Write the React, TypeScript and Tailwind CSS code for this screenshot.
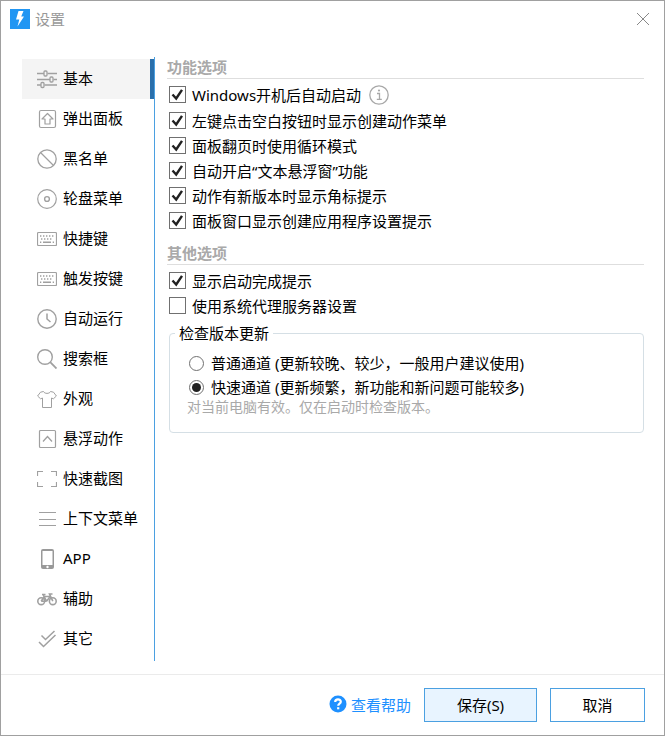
import React from "react";

type MenuItem = { label: string; icon: React.ReactNode };

const Icon = ({ children }: { children: React.ReactNode }) => (
  <svg viewBox="0 0 20 20" className="size-5 shrink-0" fill="none" stroke="#a0a0a0" aria-hidden="true">
    {children}
  </svg>
);

const KeyboardIcon = () => (
  <Icon>
    <rect x="0.5" y="3.5" width="19" height="13" rx="1" strokeWidth="1.2" />
    <path d="M3 7H17.5M4 10H16" strokeWidth="1.4" strokeDasharray="1.4 1.6" />
    <path d="M3 13.3h1.3M6 13.3h8M15.7 13.3h1.3" strokeWidth="1.4" />
  </Icon>
);

const menu: MenuItem[] = [
  {
    label: "基本",
    icon: (
      <Icon>
        <path d="M0 4.5h7M10.5 4.5H20M0 10.5h13M16.5 10.5H20M0 16h4M7.5 16H20" strokeWidth="1.3" />
        <rect x="7" y="2" width="3" height="5" rx="1" strokeWidth="1.3" />
        <rect x="13" y="8" width="3" height="5" rx="1" strokeWidth="1.3" />
        <rect x="4" y="13.5" width="3" height="5" rx="1" strokeWidth="1.3" />
      </Icon>
    ),
  },
  {
    label: "弹出面板",
    icon: (
      <Icon>
        <rect x="2.5" y="1.5" width="16" height="17" rx="1.5" strokeWidth="1.2" />
        <path d="M10.5 4.5L16 10h-3v5H8v-5H5z" strokeLinejoin="round" strokeWidth="1.2" />
      </Icon>
    ),
  },
  {
    label: "黑名单",
    icon: (
      <Icon>
        <circle cx="10" cy="10" r="9.2" strokeWidth="1.3" />
        <path d="M3.5 3.5l13 13" strokeWidth="1.3" />
      </Icon>
    ),
  },
  {
    label: "轮盘菜单",
    icon: (
      <Icon>
        <circle cx="10" cy="10" r="9.3" strokeWidth="1.2" />
        <circle cx="10" cy="10" r="2.4" strokeWidth="1.4" />
      </Icon>
    ),
  },
  { label: "快捷键", icon: <KeyboardIcon /> },
  { label: "触发按键", icon: <KeyboardIcon /> },
  {
    label: "自动运行",
    icon: (
      <Icon>
        <circle cx="10" cy="10" r="9.2" strokeWidth="1.4" />
        <path d="M10 4.5V10l3.5 3" strokeWidth="1.5" />
      </Icon>
    ),
  },
  {
    label: "搜索框",
    icon: (
      <Icon>
        <circle cx="8" cy="8" r="7.3" strokeWidth="1.4" />
        <path d="M13.2 13.2l6.3 6.3" strokeWidth="1.8" />
      </Icon>
    ),
  },
  {
    label: "外观",
    icon: (
      <Icon>
        <path
          d="M6.5 2.5L3.5 3.2 0.6 7l3 2.8L5.5 9v9.5h9V9l1.9 0.8 3-2.8-2.9-3.8-3-0.7C12.500 5 7.500 5 6.500 2.500z"
          strokeLinejoin="round"
        />
      </Icon>
    ),
  },
  {
    label: "悬浮动作",
    icon: (
      <Icon>
        <rect x="2.5" y="1.5" width="16" height="17" rx="1" strokeWidth="1.2" />
        <path d="M6 12.5l4.5-5 4.5 5" strokeWidth="1.3" />
      </Icon>
    ),
  },
  {
    label: "快速截图",
    icon: (
      <Icon>
        <path d="M0.5 7V2.5H6M14 2.5h5.5V7M19.5 13v4.5H14M6 17.5H0.5V13" strokeWidth="1.2" />
      </Icon>
    ),
  },
  {
    label: "上下文菜单",
    icon: (
      <Icon>
        <path d="M2 3.5h17M2 10.5h17M2 16.5h17" strokeWidth="1.2" />
      </Icon>
    ),
  },
  {
    label: "APP",
    icon: (
      <Icon>
        <rect x="4" y="0" width="13" height="20" rx="2" fill="#999" stroke="none" />
        <rect x="5.5" y="2" width="10" height="14" fill="#fff" stroke="none" />
        <circle cx="10.5" cy="18" r="1.2" fill="#fff" stroke="none" />
      </Icon>
    ),
  },
  {
    label: "辅助",
    icon: (
      <Icon>
        <g strokeWidth="1.6">
          <circle cx="4.2" cy="12.2" r="3.4" />
          <circle cx="15.8" cy="12.2" r="3.4" />
          <path d="M4.2 12.2L7.2 7.5h6M9.5 12.2L6.3 6M5 5.5h3.5M9.5 12.2l4-5M4.2 12.2h5.3M15.8 12.2L12.5 5h3" />
        </g>
      </Icon>
    ),
  },
  {
    label: "其它",
    icon: (
      <Icon>
        <path d="M4.5 6.5l4 4 9-8.5M2 13l4.5 4.5 12-11.5" strokeWidth="1.5" />
      </Icon>
    ),
  },
];

const Check = ({ label, checked = true }: { label: string; checked?: boolean }) => (
  <label className="flex h-[25px] items-center gap-1.5">
    <span className="grid">
      <input
        type="checkbox"
        defaultChecked={checked}
        className="peer size-[17px] appearance-none border border-[#707070] bg-white [grid-area:1/1]"
      />
      <svg viewBox="0 0 17 17" className="pointer-events-none invisible size-[17px] [grid-area:1/1] peer-checked:visible" fill="none">
        <path d="M3.5 8.5l3.7 4L13 3.8" stroke="#212121" strokeWidth="2.4" />
      </svg>
    </span>
    {label}
  </label>
);

const Radio = ({ label, checked = false }: { label: string; checked?: boolean }) => (
  <label className="flex h-6 items-center gap-[7px]">
    <span className="grid place-items-center">
      <input
        type="radio"
        name="channel"
        defaultChecked={checked}
        className="peer size-[15px] appearance-none rounded-full border border-[#707070] bg-white [grid-area:1/1]"
      />
      <span className="pointer-events-none invisible size-[9px] rounded-full bg-[#212121] [grid-area:1/1] peer-checked:visible" />
    </span>
    {label}
  </label>
);

const SectionTitle = ({ children }: { children: React.ReactNode }) => (
  <h2 className="border-b border-[#dedede] pb-px font-bold text-[#a9a9a9]">{children}</h2>
);

const App = () => {
  return (
    <div className="flex min-h-screen flex-col border border-[#a0a0a0] bg-white font-['Noto_Sans','Noto_Sans_CJK_SC',sans-serif] text-[15px] leading-5 text-black">
      <header className="flex h-14 items-start justify-between pt-2 pr-3.5 pl-[9px]">
        <div className="flex items-center gap-[5px] text-[#999]">
          <svg viewBox="0 0 20 20" className="size-5" aria-hidden="true">
            <rect width="20" height="20" fill="#2196f3" />
            <path d="M8.5 2h5l-2.3 5.500H14L7.500 17.500l1.800-7H6z" fill="#fff" />
          </svg>
          <h1>设置</h1>
        </div>
        <button aria-label="关闭" className="pt-[3px]">
          <svg viewBox="0 0 14 14" className="size-3.5" stroke="#888" fill="none">
            <path d="M1 1l12 12M13 1L1 13" />
          </svg>
        </button>
      </header>

      <main className="flex flex-1 items-start pr-5 pb-3 pl-[21px]">
        <nav className="w-[133px] shrink-0 border-r border-[#4ba0e1] py-0.5">
          {menu.map((item, i) => (
            <a
              key={item.label}
              href="#"
              className={
                i === 0
                  ? "flex h-10 items-center gap-1.5 border-r-4 border-[#2a6fab] bg-[#f4f4f4] pl-[15px]"
                  : "flex h-10 items-center gap-1.5 pl-[15px]"
              }
            >
              {item.icon}
              <span className="pb-0.5 whitespace-nowrap">{item.label}</span>
            </a>
          ))}
        </nav>

        <div className="min-w-0 flex-1 pl-3">
          <section>
            <SectionTitle>功能选项</SectionTitle>
            <div className="pt-[3px] pl-0.5">
              <div className="flex h-[26px] items-start gap-2">
                <Check label="Windows开机后自动启动" />
                <svg viewBox="0 0 20 20" className="mt-[3px] size-5" fill="none" stroke="#a8a8a8" aria-hidden="true">
                  <circle cx="10" cy="10" r="9.2" strokeWidth="1.3" />
                  <path d="M8 8.5h2.5V14M7.8 14.3h5" strokeWidth="1.3" />
                  <circle cx="10" cy="5.5" r="1.1" fill="#a8a8a8" stroke="none" />
                </svg>
              </div>
              <Check label="左键点击空白按钮时显示创建动作菜单" />
              <Check label="面板翻页时使用循环模式" />
              <Check label="自动开启“文本悬浮窗”功能" />
              <Check label="动作有新版本时显示角标提示" />
              <Check label="面板窗口显示创建应用程序设置提示" />
            </div>
          </section>

          <section className="pt-2.5">
            <SectionTitle>其他选项</SectionTitle>
            <div className="pt-[3px] pl-0.5">
              <Check label="显示启动完成提示" />
              <Check label="使用系统代理服务器设置" checked={false} />
              <fieldset className="mt-[5px] rounded border border-[#d5dfe5] px-[17px] pb-[17px]">
                <legend className="-ml-3 px-1">检查版本更新</legend>
                <div className="pt-2 pl-0.5">
                  <Radio label="普通通道 (更新较晚、较少，一般用户建议使用)" />
                  <Radio label="快速通道 (更新频繁，新功能和新问题可能较多)" checked />
                </div>
                <p className="text-sm leading-4 text-[#a9a9a9]">对当前电脑有效。仅在启动时检查版本。</p>
              </fieldset>
            </div>
          </section>
        </div>
      </main>

      <footer className="flex items-center justify-end border-t border-[#ebebeb] py-[13px] pr-[19px]">
        <a href="#" className="mr-[13px] flex items-start gap-1 text-[#1e90ff]">
          <svg viewBox="0 0 18 18" className="size-[18px]" aria-hidden="true">
            <circle cx="9" cy="9" r="8.5" fill="#1e90ff" />
            <path d="M6.2 7c0-3.5 5.6-3.3 5.6-0.3 0 1.9-2.6 1.9-2.600 4" fill="none" stroke="#fff" strokeWidth="2.2" />
            <path d="M8.1 12.2h2.2v2.1H8.1z" fill="#fff" />
          </svg>
          查看帮助
        </a>
        <button className="mr-[13px] h-[34px] w-[113px] border border-[#4ba0e1] bg-[#e8f4ff]">保存(S)</button>
        <button className="h-[34px] w-[95px] border border-[#4ba0e1] bg-white">取消</button>
      </footer>
    </div>
  );
};

export default App;
